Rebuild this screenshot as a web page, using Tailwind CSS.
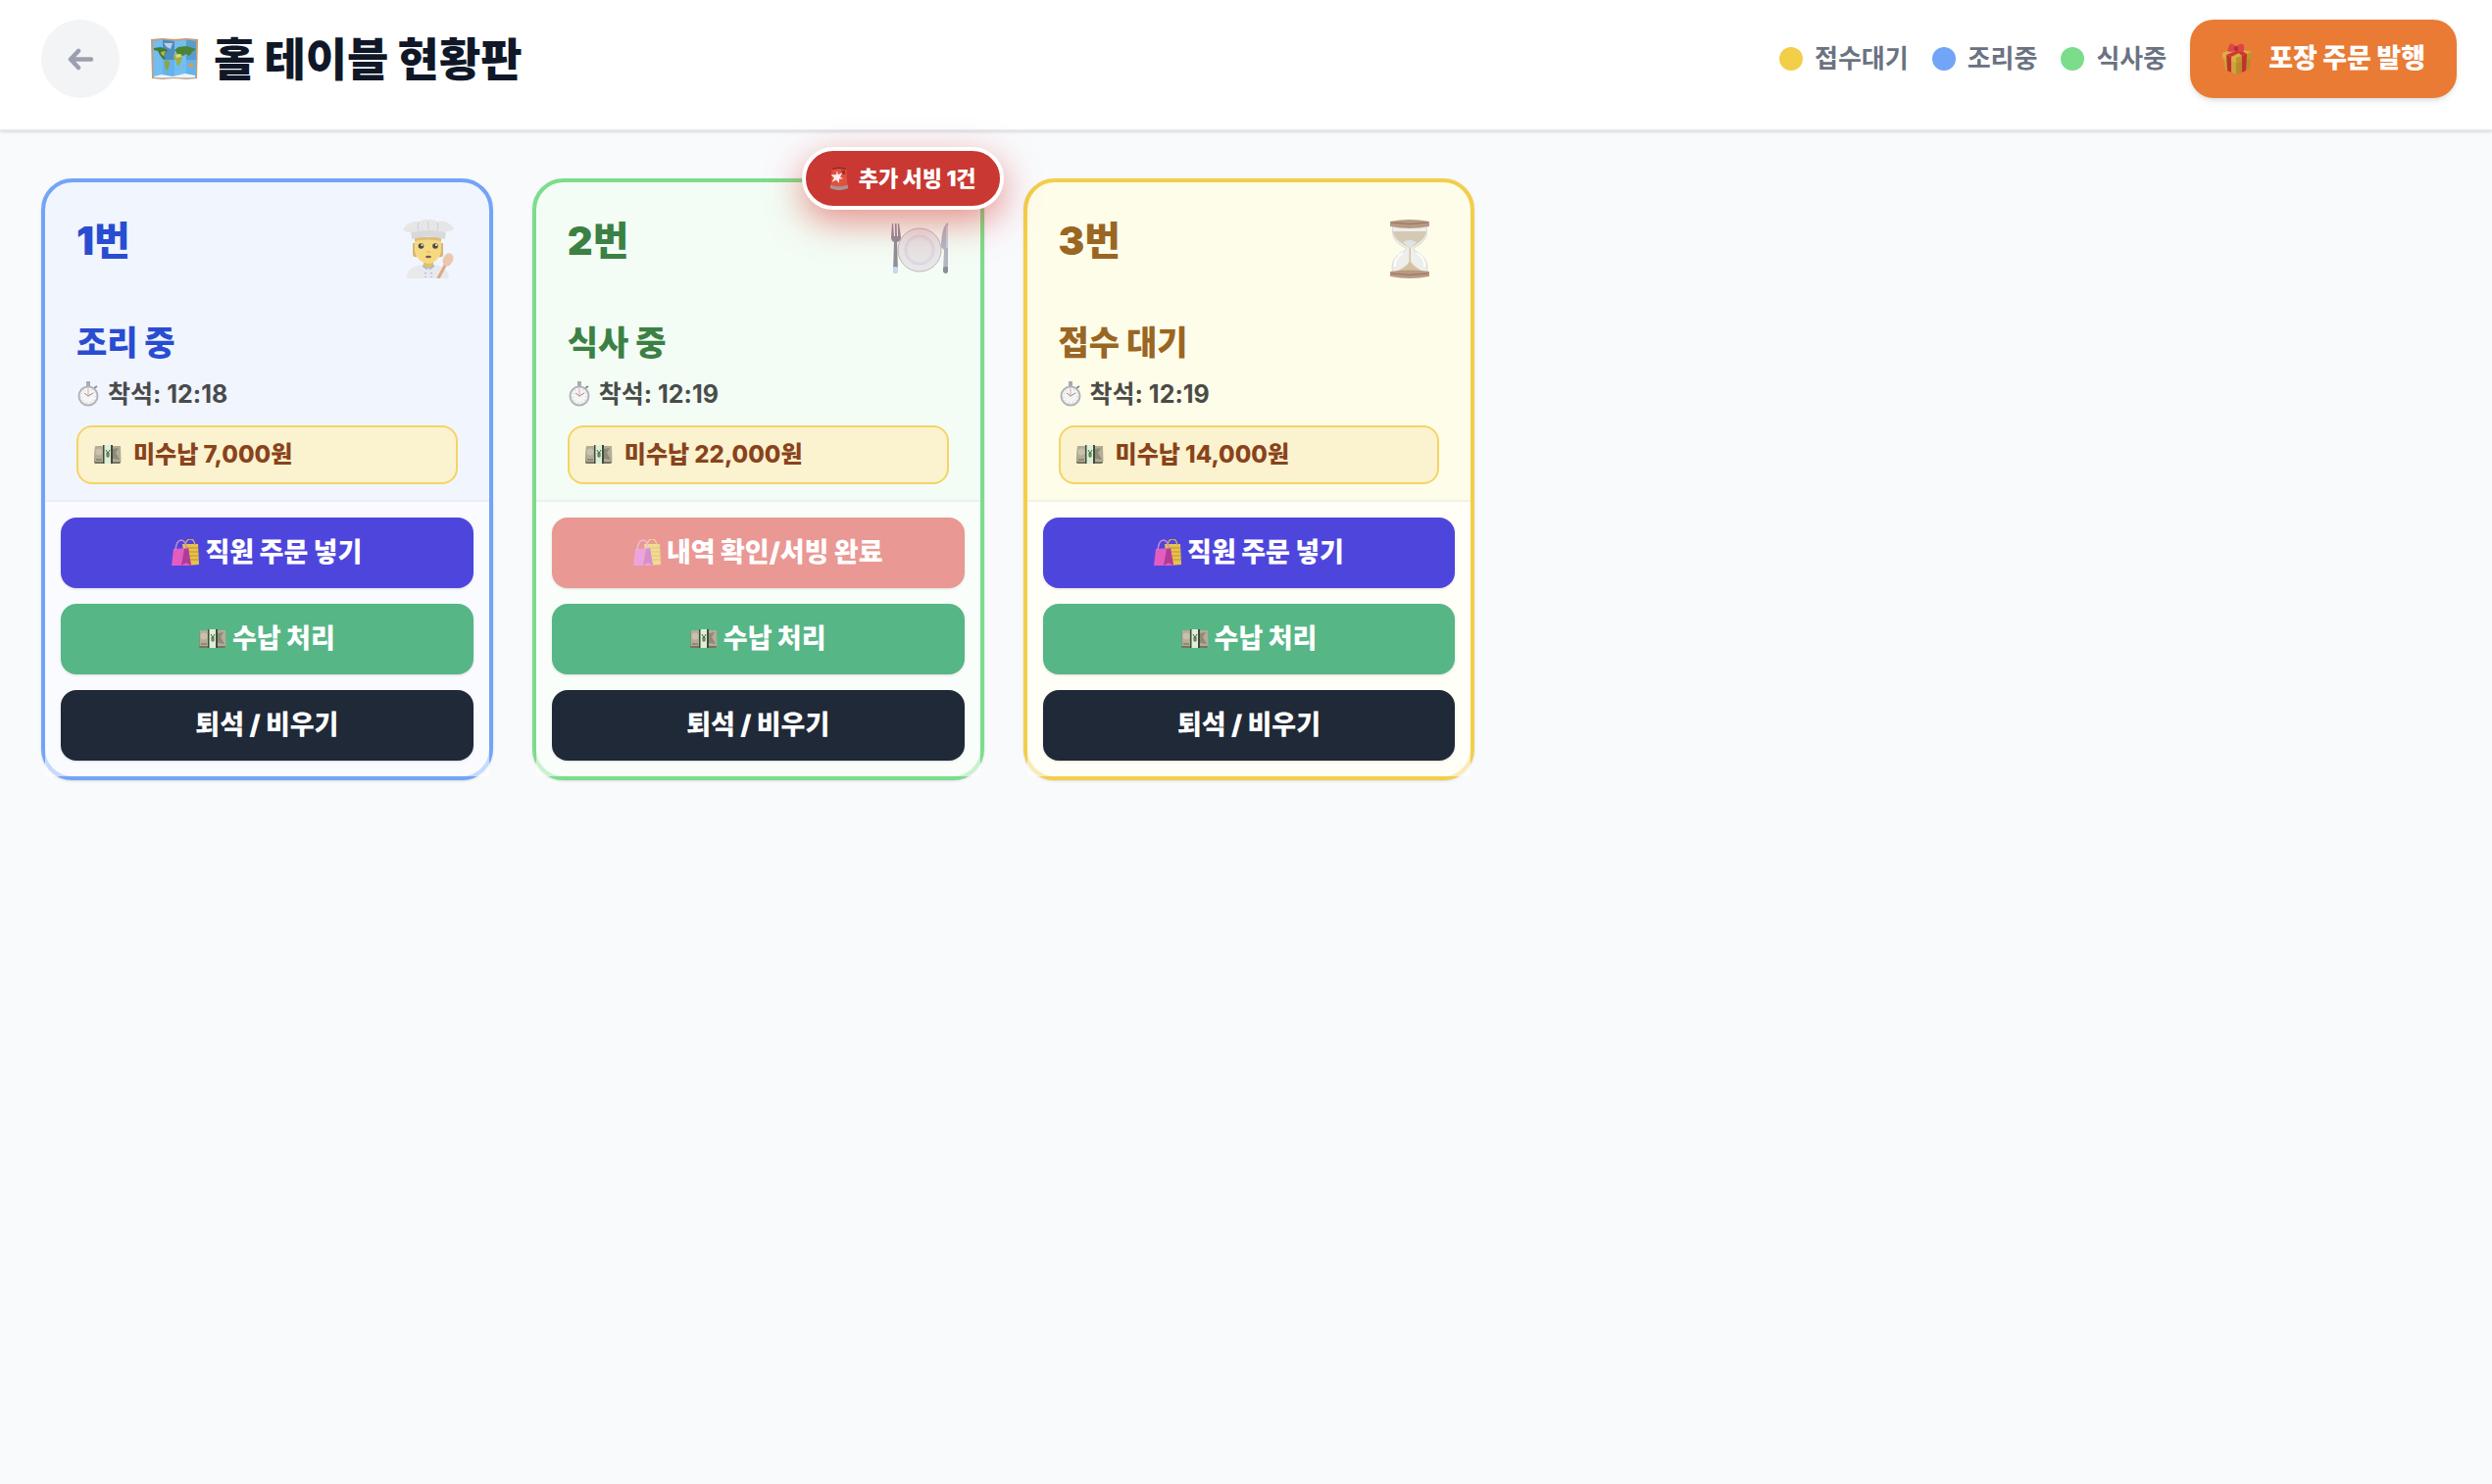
<!doctype html>
<html lang="ko">
  <head>
    <meta charset="UTF-8" />
    <meta name="viewport" content="width=device-width, initial-scale=1.0" />
    <title>홀 테이블 현황판</title>
    <script src="https://cdn.jsdelivr.net/npm/@tailwindcss/browser@4"></script>
    <style>
      body {
        font-family: Inter, "Noto Sans CJK KR", sans-serif;
      }
    </style>
  </head>
  <body class="bg-[#f9fafc] min-h-dvh">
    <!-- shared icons -->
    <svg class="hidden">
      <symbol id="map" viewBox="0 0 48 42">
        <path d="M0 1 12 0 24 1 36 0 48 1 47 41 36 42 24 41 12 42 1 41Z" fill="#c79b77" />
        <path d="M2 3 12 1.500 24 3 36 1.500 46 3 45.500 40 36 40.500 24 40 12 40.500 2.500 40Z" fill="#74bdf0" />
        <path d="M12 1.500 24 3V22H12Z" fill="#4d8dc0" /><path d="M36 1.500 46 3V22H36Z" fill="#5a9ccc" />
        <path d="M12 22H24V40L12 40.500ZM36 22H46L45.500 40 36 40.500Z" fill="#65b3ea" />
        <path d="M3 10 10 9 17 12 15 15 13 18 15 21 12 21 9 17 7 13 3 12Z" fill="#3f7d33" />
        <path d="M10 14 15 13 13 18 11 17Z" fill="#c6b04a" />
        <path d="M14 22 19 24 19 27 16 34 14 27Z" fill="#8ba83a" />
        <path d="M13 5 22 5 20 11 16 9Z" fill="#bcd0e2" />
        <path d="M24 12 28 9 36 8 46 11 42 14 39 18 36 16 33 18 27 16Z" fill="#4a8434" />
        <path d="M23 17 31 16 32 20 29 28 26 27 26 22 23 21Z" fill="#9fb040" /><path d="M25 17 30 16 31 19 26 20Z" fill="#e5d774" />
        <path d="M38 27 42 25 44 29 39 29Z" fill="#e59a3c" />
        <path d="M3 39 11 37 22 39 35 36 45 38 45 40 36 40.500 24 40 12 40.500 3 40Z" fill="#eef4f8" />
      </symbol>
      <symbol id="gift" viewBox="0 0 30 32">
        <path d="M1 14 14 19V32L3 27Z" fill="#cda23a" /><path d="M29 14 14 19V32L28 26Z" fill="#b88a2b" />
        <path d="M0 10 13 5 30 9V15L14 20 0 15Z" fill="#d8ae45" />
        <path d="M14 15V20L30 15V9Z" fill="#c1912f" />
        <path d="M4 12 9 14V30L5 28ZM20 13 25 11 24 28 20 30Z" fill="#c4302e" />
        <path d="M4 12 16 7 21 8 9 14ZM13 7 17 6 25 11 20 13Z" fill="#cf3834" />
        <path d="M14 4C11 0 8 0 7 2L5 8 8 9C11 9 13 8 14 7 17 9 20 9 22 8V3C21-1 16 1 14 4Z" fill="#dc464a" />
        <rect x="12" y="3" width="4" height="5" rx="2" fill="#b92b34" />
      </symbol>
      <symbol id="chef" viewBox="0 0 52 60">
        <path d="M10 24V36Q11 39 14 38V24ZM37 24V38Q41 39 41 36V24Z" fill="#d8b678" />
        <path d="M4 60C4 51 9 48 20 46H32C42 48 46 51 47 60Z" fill="#e9e9eb" />
        <path d="M21 38H31V47L26 50 21 47Z" fill="#e2c163" />
        <path d="M12 18H39V31C39 39 31 45 26 45 20 45 12 39 12 31Z" fill="#f5d983" />
        <path d="M12 18H39V22Q26 19 12 22Z" fill="#dfbd79" />
        <path d="M20 46 26 50 32 46 32 48 28 51 26 50 24 51 20 48Z" fill="#9bb9ea" />
        <circle cx="18.500" cy="27" r="2.800" fill="#504943" /><circle cx="33" cy="27" r="2.800" fill="#504943" />
        <circle cx="19.500" cy="26" r="1" fill="#fff" /><circle cx="34" cy="26" r="1" fill="#fff" />
        <ellipse cx="26" cy="38" rx="3" ry="1.300" fill="#7c5a50" />
        <path d="M24.500 33H27.500" stroke="#d5aa5a" />
        <path d="M8 11 9 20Q26 15 43 20L44 11Z" fill="#d9d9db" />
        <path d="M0 10C3 5 10 1 16 2 22-1 30-1 35 2 42 0 49 4 52 9 50 13 45 11 43 13Q26 9 9 13C6 13 3 13 0 10Z" fill="#e6e6e7" />
        <path d="M16 3Q14 7 16 11M35 3Q37 7 35 11M26 2V10" fill="none" stroke="#cfcfd1" />
        <path d="M36 60 44 45" stroke="#dca98c" stroke-width="3" />
        <ellipse cx="46" cy="41" rx="5" ry="7" transform="rotate(25 46 41)" fill="#edc6af" />
        <path d="M23 54V59M29 54V59" stroke="#9bb9ea" stroke-width="1.500" stroke-dasharray="1.500 2.500" />
      </symbol>
      <symbol id="plate" viewBox="0 0 60 54">
        <circle cx="30" cy="28" r="22" fill="#e8e6e8" stroke="#bdb8bb" />
        <circle cx="30" cy="28" r="15" fill="#e0dde0" stroke="#d0d5e0" /><circle cx="30" cy="28" r="12" fill="#e7e5e6" />
        <path d="M2 1 1 15Q1 19 4 20L3 50Q5 54 8 50L7 20Q11 19 11 15L9 1H8V14H7L6.500 1H5V14H4L3 1Z" fill="#8f8f9a" />
        <path d="M3 46Q5 44 8 46V50Q5 54 3 50Z" fill="#c9d8ef" />
        <path d="M59 0C54 3 52 13 52 25L55 28 54 50Q57 54 59 50Z" fill="#b3b7c4" />
        <path d="M58 3V26" stroke="#dfe6f2" /><path d="M54 46Q57 44 59 46V50Q57 54 54 50Z" fill="#898d98" />
      </symbol>
      <symbol id="hourglass" viewBox="0 0 40 60">
        <path d="M3 6H37C39 17 36 23 24 29V31C36 37 40 45 37 54H3C0 45 4 37 16 31V29C4 23 1 17 3 6Z" fill="#eeeeec" stroke="#dadbd8" />
        <path d="M3 12H37C36 21 28 24 21 29H19C12 24 4 21 3 12Z" fill="#d4cab4" />
        <path d="M19.500 28H21V43Q24 48 34 53H6Q17 48 19.500 43Z" fill="#d3c29d" />
        <path d="M13 23Q20 19 27 23L21 29H19Z" fill="#e1e2e2" />
        <path d="M5 48Q4 39 13 34M35 48Q36 39 27 34" stroke="#fff" stroke-width="2" fill="none" />
        <path d="M0 2Q20-2 40 2V7Q20 11 0 7ZM0 53Q20 50 40 53V58Q20 62 0 58Z" fill="#b99983" />
        <path d="M1 3Q20 6 39 3M1 55Q20 58 39 55" stroke="#927361" fill="none" />
      </symbol>
      <symbol id="watch" viewBox="0 0 22 26">
        <path d="M9 0H13V5H9Z" fill="#a9abb2" /><path d="M17 7 20 5" stroke="#888a92" stroke-width="2" />
        <circle cx="11" cy="15" r="9.500" fill="#f5f5f5" stroke="#b2b4ba" stroke-width="2" />
        <path d="M11 15 7 12M11 15 16 12" stroke="#8f8d92" /><path d="M11 16V8" stroke="#e5a798" />
        <circle cx="11" cy="15" r="7" fill="none" stroke="#bbb" stroke-dasharray="1 3" />
      </symbol>
      <symbol id="cash" viewBox="0 0 28 20">
        <path d="M1 1H27V18L26 19H1L0 18Z" fill="#77745f" />
        <path d="M1 1H27L27.500 17H.500Z" fill="#b3ac96" />
        <circle cx="5" cy="7" r="3.500" fill="#c8c1ac" /><path d="M2 15H8" stroke="#6d6a59" />
        <path d="M19 4 25 3 22 8 26 15 19 14Z" fill="#8d8a7a" />
        <path d="M9 0H19V19H9Z" fill="#3f4b3c" /><path d="M10.500 0H17V19H10.500Z" fill="#dfeed9" />
        <path d="M12 5 14 8.500 16 5M14 8V13M12 9H16M12 11H16" stroke="#3e6a2f" fill="none" />
      </symbol>
      <symbol id="bags" viewBox="0 0 28 28">
        <path d="M11 5H27L28 26 14 27Z" fill="#e4c34e" />
        <path d="M14 9H27M15 13H27M15 17H27M15 21H28" stroke="#c58d31" />
        <path d="M14 6Q15 0 19 0 23 0 24 6" fill="none" stroke="#d6ab57" stroke-width="1.500" />
        <path d="M2 10 17 9 20 27H0Z" fill="#e35cc0" />
        <path d="M13 10 17 9 20 27 15 24 10 27Z" fill="#ae3c96" />
        <path d="M4 11Q5 1 10 1 15 2 15 10" fill="none" stroke="#c98ac9" stroke-width="1.500" />
      </symbol>
      <!-- faded bags for the serving button -->
      <symbol id="bags-light" viewBox="0 0 28 28">
        <path d="M11 5H27L28 26 14 27Z" fill="#f0dc93" />
        <path d="M14 9H27M15 13H27M15 17H27M15 21H28" stroke="#e6c082" />
        <path d="M14 6Q15 0 19 0 23 0 24 6" fill="none" stroke="#efcf96" stroke-width="1.500" />
        <path d="M2 10 17 9 20 27H0Z" fill="#eda4dc" />
        <path d="M13 10 17 9 20 27 15 24 10 27Z" fill="#d590c8" />
        <path d="M4 11Q5 1 10 1 15 2 15 10" fill="none" stroke="#e8bcdc" stroke-width="1.500" />
      </symbol>
      <symbol id="siren" viewBox="0 0 18 23">
        <path d="M1 17H17L18 21Q9 25 0 21Z" fill="#a79597" />
        <path d="M2 2Q9-1 16 2L17 18Q9 21 1 18Z" fill="#e0523f" />
        <path d="M2 2Q9-1 16 2L15 3Q9 1 3 3Z" fill="#8d2325" />
        <path d="M11 3 15 4 15 8 12 7Z" fill="#a52a29" />
        <path d="M7 4 8 8 12 6 10 10 13 12 9 12 9 16 6 13 2 15 4 11 1 8 6 8Z" fill="#fff0ee" />
      </symbol>
    </svg>

    <header class="flex items-center justify-between bg-white border-b-2 border-gray-200 shadow-sm pt-5 pb-8 pl-[42px] pr-9">
      <div class="flex items-center gap-8">
        <button aria-label="뒤로" class="size-20 rounded-full bg-gray-100 flex items-center justify-center">
          <svg class="w-7 h-6" viewBox="0 0 28 24" fill="none" stroke="#9ca0ae" stroke-width="4.500" stroke-linecap="round" stroke-linejoin="round"><path d="M12 4 4 12.500 12 21M4 12.500H25" /></svg>
        </button>
        <h1 class="flex items-center gap-4 text-[46px] leading-[56px] font-black text-gray-900">
          <svg class="w-12 h-[42px]"><use href="#map" /></svg>
          홀 테이블 현황판
        </h1>
      </div>
      <div class="flex items-center gap-6 text-[26px] leading-10 font-bold text-gray-500">
        <span class="flex items-center gap-3"><i class="size-6 rounded-full bg-[#f3ce49]"></i>접수대기</span>
        <span class="flex items-center gap-3"><i class="size-6 rounded-full bg-[#72a4f7]"></i>조리중</span>
        <span class="flex items-center gap-3"><i class="size-6 rounded-full bg-[#7bdd8b]"></i>식사중</span>
        <button class="h-20 flex items-center gap-4 rounded-3xl bg-[#e97b35] px-8 text-[27px] text-white font-black shadow-md">
          <svg class="w-8 h-8"><use href="#gift" /></svg>
          포장 주문 발행
        </button>
      </div>
    </header>

    <main class="grid grid-cols-5 gap-10 pl-[42px] pr-9 pt-12">
      <!-- table 1 -->
      <section class="rounded-4xl border-4 border-[#72a4f7] bg-[#f1f5fe] shadow-sm">
        <div class="px-8 pt-7 pb-4">
          <div class="flex items-start justify-between h-28">
            <h2 class="text-[40px] leading-[64px] font-black text-[#294dd1]">1번</h2>
            <svg class="w-[60px] h-[60px] mt-2.5"><use href="#chef" /></svg>
          </div>
          <p class="text-[34px] leading-[48px] font-black text-[#294dd1]">조리 중</p>
          <p class="mt-2 flex items-center gap-2 text-[25px] leading-10 font-bold text-[#4a4a4c]"><svg class="w-6 h-[26px]"><use href="#watch" /></svg>착석: 12:18</p>
          <p class="mt-3 h-[60px] flex items-center gap-3 rounded-2xl border-2 border-[#f5d366] bg-[#fbf3cf] px-4 text-[24px] font-extrabold text-[#89431c]"><svg class="w-7 h-5"><use href="#cash" /></svg>미수납 7,000원</p>
        </div>
        <div class="flex flex-col gap-4 border-t-2 border-[#eceef3] bg-white/60 p-4 text-[27px] font-black text-white">
          <button class="h-18 flex items-center justify-center gap-1.5 rounded-2xl bg-[#4e46dc] shadow-sm"><svg class="size-7"><use href="#bags" /></svg>직원 주문 넣기</button>
          <button class="h-18 flex items-center justify-center gap-1.5 rounded-2xl bg-[#56b686] shadow-sm"><svg class="w-7 h-5"><use href="#cash" /></svg>수납 처리</button>
          <button class="h-18 rounded-2xl bg-[#202938] shadow-sm">퇴석 / 비우기</button>
        </div>
      </section>

      <!-- table 2 -->
      <section class="relative rounded-4xl border-4 border-[#7bdd8b] bg-[#f3fdf5] shadow-sm">
        <div class="absolute -top-9 -right-6 h-16 flex items-center gap-2.5 rounded-full border-4 border-white bg-[#c93832] px-6 text-[22px] font-black text-white whitespace-nowrap shadow-[0_12px_36px_rgba(220,38,38,0.5)]">
          <svg class="w-5 h-6"><use href="#siren" /></svg>
          추가 서빙 1건
        </div>
        <div class="px-8 pt-7 pb-4">
          <div class="flex items-start justify-between h-28">
            <h2 class="text-[40px] leading-[64px] font-black text-[#3c8044]">2번</h2>
            <svg class="w-[60px] h-[60px] mt-2.5"><use href="#plate" /></svg>
          </div>
          <p class="text-[34px] leading-[48px] font-black text-[#3c8044]">식사 중</p>
          <p class="mt-2 flex items-center gap-2 text-[25px] leading-10 font-bold text-[#4a4c4a]"><svg class="w-6 h-[26px]"><use href="#watch" /></svg>착석: 12:19</p>
          <p class="mt-3 h-[60px] flex items-center gap-3 rounded-2xl border-2 border-[#f5d366] bg-[#fbf3cf] px-4 text-[24px] font-extrabold text-[#89431c]"><svg class="w-7 h-5"><use href="#cash" /></svg>미수납 22,000원</p>
        </div>
        <div class="flex flex-col gap-4 border-t-2 border-[#ebf1ec] bg-white/60 p-4 text-[27px] font-black text-white">
          <button class="h-18 flex items-center justify-center gap-1.5 rounded-2xl bg-[#e99893] shadow-sm"><svg class="size-7"><use href="#bags-light" /></svg>내역 확인/서빙 완료</button>
          <button class="h-18 flex items-center justify-center gap-1.5 rounded-2xl bg-[#56b686] shadow-sm"><svg class="w-7 h-5"><use href="#cash" /></svg>수납 처리</button>
          <button class="h-18 rounded-2xl bg-[#202938] shadow-sm">퇴석 / 비우기</button>
        </div>
      </section>

      <!-- table 3 -->
      <section class="rounded-4xl border-4 border-[#f3ce49] bg-[#fefdea] shadow-sm">
        <div class="px-8 pt-7 pb-4">
          <div class="flex items-start justify-between h-28">
            <h2 class="text-[40px] leading-[64px] font-black text-[#9a6623]">3번</h2>
            <svg class="w-[60px] h-[60px] mt-2.5"><use href="#hourglass" /></svg>
          </div>
          <p class="text-[34px] leading-[48px] font-black text-[#9a6623]">접수 대기</p>
          <p class="mt-2 flex items-center gap-2 text-[25px] leading-10 font-bold text-[#4b4b46]"><svg class="w-6 h-[26px]"><use href="#watch" /></svg>착석: 12:19</p>
          <p class="mt-3 h-[60px] flex items-center gap-3 rounded-2xl border-2 border-[#f5d366] bg-[#fbf3cf] px-4 text-[24px] font-extrabold text-[#89431c]"><svg class="w-7 h-5"><use href="#cash" /></svg>미수납 14,000원</p>
        </div>
        <div class="flex flex-col gap-4 border-t-2 border-[#f3f2e4] bg-white/60 p-4 text-[27px] font-black text-white">
          <button class="h-18 flex items-center justify-center gap-1.5 rounded-2xl bg-[#4e46dc] shadow-sm"><svg class="size-7"><use href="#bags" /></svg>직원 주문 넣기</button>
          <button class="h-18 flex items-center justify-center gap-1.5 rounded-2xl bg-[#56b686] shadow-sm"><svg class="w-7 h-5"><use href="#cash" /></svg>수납 처리</button>
          <button class="h-18 rounded-2xl bg-[#202938] shadow-sm">퇴석 / 비우기</button>
        </div>
      </section>
    </main>
  </body>
</html>
